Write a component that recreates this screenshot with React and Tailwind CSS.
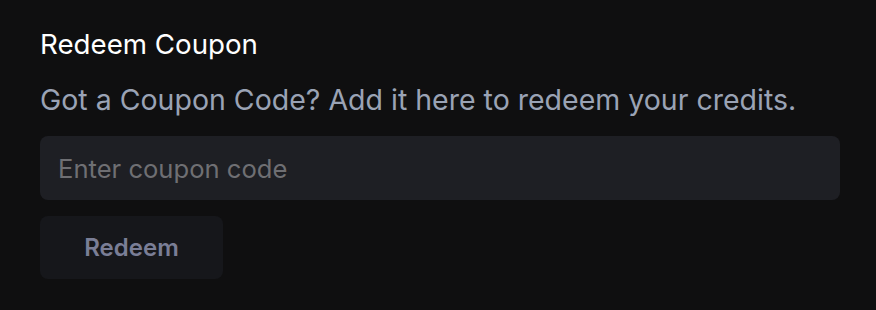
import { useState } from "react";

const App = () => {
  const [code, setCode] = useState("");

  return (
    <div className="min-h-[310px] w-full bg-[#0f0f10] font-['Inter',sans-serif]">
      <div className="flex flex-col px-10 pt-[27px]">
        <h2 className="text-[27.7px] leading-[34px] text-white">Redeem Coupon</h2>
        <p className="mt-[22px] text-[28.5px] leading-[34px] text-[#9aa3b5]">
          Got a Coupon Code? Add it here to redeem your credits.
        </p>
        <input
          type="text"
          value={code}
          onChange={(e) => setCode(e.target.value)}
          placeholder="Enter coupon code"
          className="mt-[19px] h-16 w-[800px] rounded-lg bg-[#1e1f24] px-[18px] text-[25.6px] text-white outline-none placeholder:text-[#6f6f73]"
        />
        <button className="mt-4 h-[63px] w-[183px] rounded-lg bg-[#16171b] text-[24px] font-semibold text-[#7a7e96]">
          Redeem
        </button>
      </div>
    </div>
  );
};

export default App;
